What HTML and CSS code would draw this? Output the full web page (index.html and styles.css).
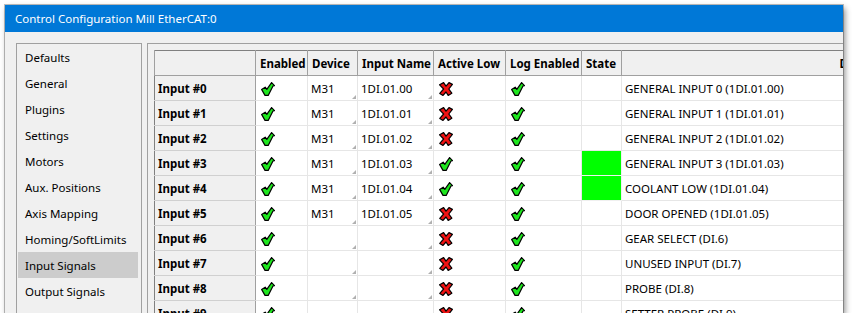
FILE: index.html
```html
<!DOCTYPE html>
<html lang="en">
<head>
    <meta charset="UTF-8">
    <title>Control Configuration Mill EtherCAT:0</title>
    <link rel="stylesheet" href="styles.css">
</head>
<body>
<svg class="defs" width="0" height="0">
    <defs>
        <symbol id="chk" viewBox="0 0 14 14">
            <path d="M0.6 7.4 L4.2 5.2 L5.8 7.4 L10.6 0.6 L13.5 3.6 L12 4 L7.2 13.4 L4 13.4 Z" fill="#1ee61e" stroke="#000" stroke-width="1.2" stroke-linejoin="round"/>
        </symbol>
        <symbol id="cross" viewBox="0 0 14 14">
            <path d="M0.6 2.8 L4.6 0.6 L7 4.2 L10 0.6 L13.4 2.4 L9.8 7 L12.8 11.2 L9.2 13.4 L7 10 L4 13.4 L0.8 11.4 L4.6 7 Z" fill="#ee1212" stroke="#000" stroke-width="1.2" stroke-linejoin="round"/>
        </symbol>
    </defs>
</svg>

<div class="window">
    <div class="titlebar">Control Configuration Mill EtherCAT:0</div>
    <div class="content">
        <ul class="nav">
            <li>Defaults</li>
            <li>General</li>
            <li>Plugins</li>
            <li>Settings</li>
            <li>Motors</li>
            <li>Aux. Positions</li>
            <li>Axis Mapping</li>
            <li>Homing/SoftLimits</li>
            <li class="selected">Input Signals</li>
            <li>Output Signals</li>
        </ul>

        <div class="grid-frame">
            <table class="grid">
                <colgroup>
                    <col style="width:101px">
                    <col style="width:52px">
                    <col style="width:50px">
                    <col style="width:76px">
                    <col style="width:72px">
                    <col style="width:76px">
                    <col style="width:40px">
                    <col style="width:500px">
                </colgroup>
                <thead>
                    <tr>
                        <th></th>
                        <th>Enabled</th>
                        <th>Device</th>
                        <th>Input Name</th>
                        <th>Active Low</th>
                        <th>Log Enabled</th>
                        <th>State</th>
                        <th class="center">Description</th>
                    </tr>
                </thead>
                <tbody>
                    <tr>
                        <th class="rowhead">Input #0</th>
                        <td><svg class="icon"><use href="#chk"/></svg></td>
                        <td class="combo">M31</td>
                        <td class="combo">1DI.01.00</td>
                        <td><svg class="icon"><use href="#cross"/></svg></td>
                        <td><svg class="icon"><use href="#chk"/></svg></td>
                        <td></td>
                        <td>GENERAL INPUT 0 (1DI.01.00)</td>
                    </tr>
                    <tr>
                        <th class="rowhead">Input #1</th>
                        <td><svg class="icon"><use href="#chk"/></svg></td>
                        <td class="combo">M31</td>
                        <td class="combo">1DI.01.01</td>
                        <td><svg class="icon"><use href="#cross"/></svg></td>
                        <td><svg class="icon"><use href="#chk"/></svg></td>
                        <td></td>
                        <td>GENERAL INPUT 1 (1DI.01.01)</td>
                    </tr>
                    <tr>
                        <th class="rowhead">Input #2</th>
                        <td><svg class="icon"><use href="#chk"/></svg></td>
                        <td class="combo">M31</td>
                        <td class="combo">1DI.01.02</td>
                        <td><svg class="icon"><use href="#cross"/></svg></td>
                        <td><svg class="icon"><use href="#chk"/></svg></td>
                        <td></td>
                        <td>GENERAL INPUT 2 (1DI.01.02)</td>
                    </tr>
                    <tr>
                        <th class="rowhead">Input #3</th>
                        <td><svg class="icon"><use href="#chk"/></svg></td>
                        <td class="combo">M31</td>
                        <td class="combo">1DI.01.03</td>
                        <td><svg class="icon"><use href="#chk"/></svg></td>
                        <td><svg class="icon"><use href="#chk"/></svg></td>
                        <td class="on"></td>
                        <td>GENERAL INPUT 3 (1DI.01.03)</td>
                    </tr>
                    <tr>
                        <th class="rowhead">Input #4</th>
                        <td><svg class="icon"><use href="#chk"/></svg></td>
                        <td class="combo">M31</td>
                        <td class="combo">1DI.01.04</td>
                        <td><svg class="icon"><use href="#chk"/></svg></td>
                        <td><svg class="icon"><use href="#chk"/></svg></td>
                        <td class="on"></td>
                        <td>COOLANT LOW (1DI.01.04)</td>
                    </tr>
                    <tr>
                        <th class="rowhead">Input #5</th>
                        <td><svg class="icon"><use href="#chk"/></svg></td>
                        <td class="combo">M31</td>
                        <td class="combo">1DI.01.05</td>
                        <td><svg class="icon"><use href="#cross"/></svg></td>
                        <td><svg class="icon"><use href="#chk"/></svg></td>
                        <td></td>
                        <td>DOOR OPENED (1DI.01.05)</td>
                    </tr>
                    <tr>
                        <th class="rowhead">Input #6</th>
                        <td><svg class="icon"><use href="#chk"/></svg></td>
                        <td class="combo"></td>
                        <td class="combo"></td>
                        <td><svg class="icon"><use href="#cross"/></svg></td>
                        <td><svg class="icon"><use href="#chk"/></svg></td>
                        <td></td>
                        <td>GEAR SELECT (DI.6)</td>
                    </tr>
                    <tr>
                        <th class="rowhead">Input #7</th>
                        <td><svg class="icon"><use href="#chk"/></svg></td>
                        <td class="combo"></td>
                        <td class="combo"></td>
                        <td><svg class="icon"><use href="#cross"/></svg></td>
                        <td><svg class="icon"><use href="#chk"/></svg></td>
                        <td></td>
                        <td>UNUSED INPUT (DI.7)</td>
                    </tr>
                    <tr>
                        <th class="rowhead">Input #8</th>
                        <td><svg class="icon"><use href="#chk"/></svg></td>
                        <td class="combo"></td>
                        <td class="combo"></td>
                        <td><svg class="icon"><use href="#cross"/></svg></td>
                        <td><svg class="icon"><use href="#chk"/></svg></td>
                        <td></td>
                        <td>PROBE (DI.8)</td>
                    </tr>
                    <tr>
                        <th class="rowhead">Input #9</th>
                        <td><svg class="icon"><use href="#chk"/></svg></td>
                        <td class="combo"></td>
                        <td class="combo"></td>
                        <td><svg class="icon"><use href="#cross"/></svg></td>
                        <td><svg class="icon"><use href="#chk"/></svg></td>
                        <td></td>
                        <td>SETTER PROBE (DI.9)</td>
                    </tr>
                </tbody>
            </table>
        </div>
    </div>
</div>
</body>
</html>
```

FILE: styles.css
```css
/* Reset */
* {
  box-sizing: border-box;
  margin: 0;
  padding: 0;
}

body {
  background: #fff;
  font-family: "Noto Sans", "Open Sans", sans-serif;
  font-size: 11.5px;
  color: #000;
}

.defs {
  position: absolute;
}

/* Window */
.window {
  margin: 5px 0 0 5px;
  width: 838px;
  height: 308px;
  background: #f0f0f0;
  display: flex;
  flex-direction: column;
  overflow: hidden;
  box-shadow: 0 0 0 1px rgba(0, 0, 0, 0.25), 2px 3px 6px rgba(0, 0, 0, 0.45);
}

.titlebar {
  height: 27px;
  line-height: 28px;
  padding-left: 10px;
  background: #0078d7;
  color: #fff;
  white-space: nowrap;
}

.content {
  flex: 1;
  min-height: 0;
  display: flex;
  gap: 5px;
  padding: 11px 0 0 11px;
}

/* Left list */
.nav {
  list-style: none;
  width: 126px;
  flex-shrink: 0;
  border: 1px solid #a0a0a0;
  border-bottom: none;
  padding: 0 3px 0 1px;
  background: #f0f0f0;
}

.nav li {
  height: 26px;
  line-height: 27px;
  padding-left: 7px;
  white-space: nowrap;
}

.nav li.selected {
  background: #cccccc;
}

/* Grid */
.grid-frame {
  flex: 1;
  min-width: 0;
  border: 1px solid #a0a0a0;
  border-right: none;
  border-bottom: none;
  padding: 6px 0 0 6px;
  overflow: hidden;
}

.grid {
  border-collapse: collapse;
  table-layout: fixed;
  width: 967px;
  border-top: 1px solid #808080;
  border-left: 1px solid #808080;
  background: #fff;
}

.grid th,
.grid td {
  height: 25px;
  padding-top: 1px;
  white-space: nowrap;
  overflow: hidden;
  text-align: left;
  vertical-align: middle;
}

.grid thead th {
  background: #f0f0f0;
  font-weight: bold;
  padding-left: 4px;
  padding-right: 2px;
  border: 1px solid #a0a0a0;
  border-top: none;
}

.grid thead th.center {
  text-align: center;
}

.grid th.rowhead {
  background: #f0f0f0;
  font-weight: bold;
  padding-left: 3px;
  border-bottom: 1px solid #d0d0d0;
  border-right: 1px solid #a0a0a0;
}

.grid td {
  padding-left: 3px;
  padding-right: 3px;
  border: 1px solid #e6e6e6;
  position: relative;
}

.grid td.on {
  background: #00ff00;
  border-color: #f0f0f0;
}

.grid td.combo::after {
  content: "";
  position: absolute;
  right: 1px;
  bottom: 1px;
  border-left: 4px solid transparent;
  border-bottom: 4px solid #b0b0b0;
}

.icon {
  display: block;
  width: 14px;
  height: 14px;
  margin-left: 2px;
}
```
